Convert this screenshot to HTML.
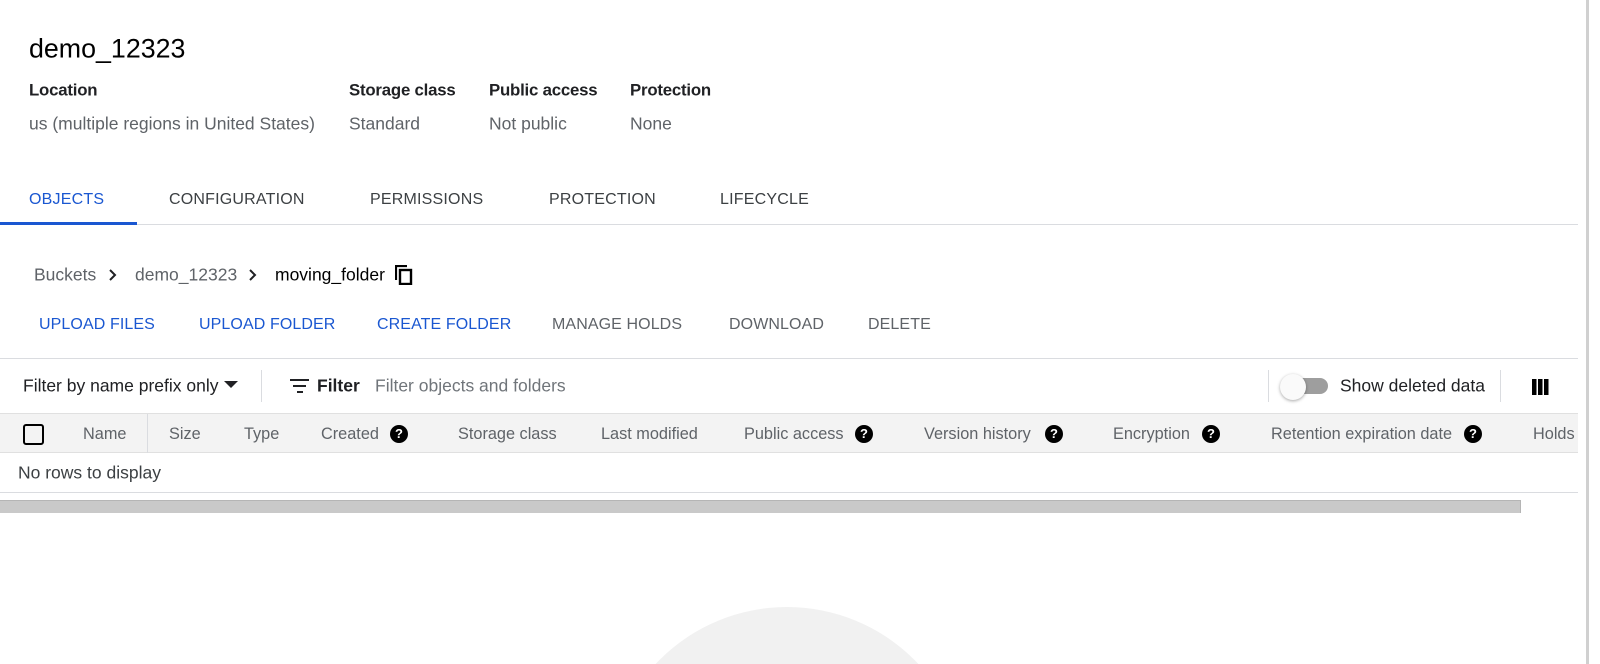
<!DOCTYPE html>
<html><head><meta charset="utf-8"><style>
*{margin:0;padding:0;box-sizing:border-box}
html,body{width:1600px;height:664px;overflow:hidden;background:#fff}
body{font-family:"Liberation Sans",Arial,sans-serif;color:#202124}
#w{position:relative;width:1600px;height:664px;overflow:hidden}
.a{position:absolute;white-space:nowrap;line-height:1}
.t{transform:translateY(-50%)}
.lbl{font-size:16.8px;font-weight:bold;color:#202124;letter-spacing:-.2px}
.val{font-size:17.5px;color:#5f6368}
.tab{font-size:16px;color:#3c4043;letter-spacing:.2px}
.btn{font-size:16px;letter-spacing:.1px}
.blue{color:#1a57d1}
.gr{color:#5f6368}
.hd{font-size:16.3px;color:#5f6368}
.q{position:absolute;width:18px;height:18px;border-radius:50%;background:#000;color:#fff;font-size:13px;font-weight:bold;text-align:center;line-height:18px;transform:translateY(-50%)}
</style></head><body><div id="w">
<div class="a t" style="left:29px;top:49px;font-size:26.8px;color:#000">demo_12323</div>

<div class="a t lbl" style="left:29px;top:91px">Location</div>
<div class="a t lbl" style="left:349px;top:91px">Storage class</div>
<div class="a t lbl" style="left:489px;top:91px">Public access</div>
<div class="a t lbl" style="left:630px;top:91px">Protection</div>
<div class="a t val" style="left:29px;top:124px">us (multiple regions in United States)</div>
<div class="a t val" style="left:349px;top:124px">Standard</div>
<div class="a t val" style="left:489px;top:124px">Not public</div>
<div class="a t val" style="left:630px;top:124px">None</div>

<div class="a t tab blue" style="left:29px;top:200px">OBJECTS</div>
<div class="a t tab" style="left:169px;top:200px">CONFIGURATION</div>
<div class="a t tab" style="left:370px;top:200px">PERMISSIONS</div>
<div class="a t tab" style="left:549px;top:200px">PROTECTION</div>
<div class="a t tab" style="left:720px;top:200px">LIFECYCLE</div>
<div class="a" style="left:0;top:224px;width:1578px;height:1px;background:#dadce0"></div>
<div class="a" style="left:0;top:222px;width:137px;height:3px;background:#1a57d1"></div>

<div class="a t val" style="left:34px;top:275px">Buckets</div>
<svg class="a" style="left:106px;top:267px" width="14" height="16" viewBox="0 0 14 16"><path d="M4 3l5 5-5 5" fill="none" stroke="#202124" stroke-width="2"/></svg>
<div class="a t val" style="left:135px;top:275px">demo_12323</div>
<svg class="a" style="left:246px;top:267px" width="14" height="16" viewBox="0 0 14 16"><path d="M4 3l5 5-5 5" fill="none" stroke="#202124" stroke-width="2"/></svg>
<div class="a t" style="left:275px;top:275px;font-size:17.5px;color:#000">moving_folder</div>
<svg class="a" style="left:395px;top:265px" width="18" height="20" viewBox="0 0 18 20"><path d="M1 15V1h11" fill="none" stroke="#000" stroke-width="2.2"/><rect x="5" y="5" width="11" height="14" fill="none" stroke="#000" stroke-width="2.4"/></svg>

<div class="a t btn blue" style="left:39px;top:325px">UPLOAD FILES</div>
<div class="a t btn blue" style="left:199px;top:325px">UPLOAD FOLDER</div>
<div class="a t btn blue" style="left:377px;top:325px">CREATE FOLDER</div>
<div class="a t btn gr" style="left:552px;top:325px">MANAGE HOLDS</div>
<div class="a t btn gr" style="left:729px;top:325px">DOWNLOAD</div>
<div class="a t btn gr" style="left:868px;top:325px">DELETE</div>
<div class="a" style="left:0;top:358px;width:1578px;height:1px;background:#dadce0"></div>

<div class="a t" style="left:23px;top:386px;font-size:17.5px;color:#202124">Filter by name prefix only</div>
<svg class="a" style="left:224px;top:381px" width="14" height="8"><path d="M0 0h14L7 7z" fill="#202124"/></svg>
<div class="a" style="left:261px;top:370px;width:1px;height:32px;background:#dadce0"></div>
<svg class="a" style="left:290px;top:378px" width="20" height="16"><rect x="0" y="1" width="19" height="2" fill="#202124"/><rect x="3" y="7" width="13" height="2" fill="#202124"/><rect x="7" y="13" width="6" height="2" fill="#202124"/></svg>
<div class="a t" style="left:317px;top:386px;font-size:17.5px;font-weight:bold;color:#202124">Filter</div>
<div class="a t" style="left:375px;top:386px;font-size:17.5px;color:#70757a">Filter objects and folders</div>
<div class="a" style="left:1268px;top:370px;width:1px;height:32px;background:#dadce0"></div>
<div class="a" style="left:1290px;top:378px;width:38px;height:16px;border-radius:8px;background:#9e9e9e"></div>
<div class="a" style="left:1280px;top:374px;width:26px;height:26px;border-radius:50%;background:#fafafa;box-shadow:0 1px 3px rgba(0,0,0,.35)"></div>
<div class="a t" style="left:1340px;top:386px;font-size:17.5px;color:#202124">Show deleted data</div>
<div class="a" style="left:1500px;top:370px;width:1px;height:32px;background:#dadce0"></div>
<svg class="a" style="left:1532px;top:379px" width="18" height="16"><rect x="0" y="0" width="4.5" height="16" fill="#000"/><rect x="6" y="0" width="4.5" height="16" fill="#000"/><rect x="12" y="0" width="4.5" height="16" fill="#000"/></svg>

<div class="a" style="left:0;top:413px;width:1578px;height:40px;background:#f3f3f3;border-top:1px solid #e0e0e0;border-bottom:1px solid #e0e0e0"></div>
<div class="a" style="left:23px;top:424px;width:21px;height:21px;border:2.5px solid #000;border-radius:3px"></div>
<div class="a" style="left:147px;top:414px;width:1px;height:39px;background:#dadce0"></div>
<div class="a t hd" style="left:83px;top:434px">Name</div>
<div class="a t hd" style="left:169px;top:434px">Size</div>
<div class="a t hd" style="left:244px;top:434px">Type</div>
<div class="a t hd" style="left:321px;top:434px">Created</div><div class="q" style="left:390px;top:434px">?</div>
<div class="a t hd" style="left:458px;top:434px">Storage class</div>
<div class="a t hd" style="left:601px;top:434px">Last modified</div>
<div class="a t hd" style="left:744px;top:434px">Public access</div><div class="q" style="left:855px;top:434px">?</div>
<div class="a t hd" style="left:924px;top:434px">Version history</div><div class="q" style="left:1045px;top:434px">?</div>
<div class="a t hd" style="left:1113px;top:434px">Encryption</div><div class="q" style="left:1202px;top:434px">?</div>
<div class="a t hd" style="left:1271px;top:434px">Retention expiration date</div><div class="q" style="left:1464px;top:434px">?</div>
<div class="a t hd" style="left:1533px;top:434px">Holds</div>

<div class="a t" style="left:18px;top:473px;font-size:17.5px;color:#3c4043">No rows to display</div>
<div class="a" style="left:0;top:492px;width:1578px;height:1px;background:#dadce0"></div>
<div class="a" style="left:0;top:500px;width:1521px;height:13px;background:#c9c9c9;border-top:1px solid #b5b5b5;border-right:1px solid #b5b5b5"></div>
<div class="a" style="left:1586px;top:0;width:3px;height:664px;background:#d0d0d0"></div>

<div class="a" style="left:607px;top:607px;width:360px;height:57px;overflow:hidden">
<div style="width:360px;height:360px;border-radius:50%;background:#f1f1f1"></div>
</div>
</div></body></html>
